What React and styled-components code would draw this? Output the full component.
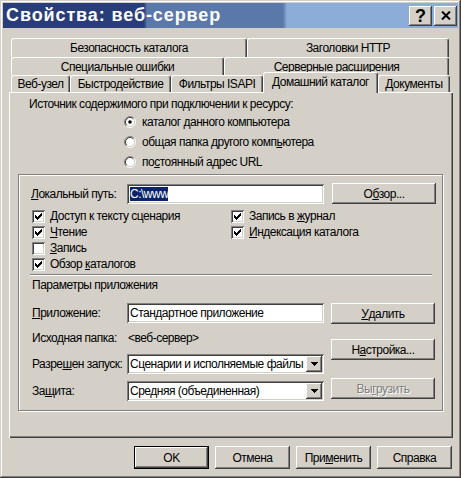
import React from 'react';
import styled, { createGlobalStyle, css } from 'styled-components';

const Global = createGlobalStyle`
  html, body { margin: 0; padding: 0; background: #d4d0c8; }
  body { font-family: "Liberation Sans", Arial, sans-serif; font-size: 12px; letter-spacing: -0.5px; color: #000; }
  * { box-sizing: border-box; }
`;

const raised = css`
  box-shadow: inset -1px -1px #404040, inset 1px 1px #fff, inset -2px -2px #808080, inset 2px 2px #d4d0c8;
`;
const sunken = css`
  box-shadow: inset 1px 1px #808080, inset -1px -1px #fff, inset 2px 2px #404040, inset -2px -2px #d4d0c8;
`;

const Window = styled.div`
  width: 461px;
  height: 478px;
  background: #d4d0c8;
  padding: 3px;
  box-shadow: inset -1px -1px #404040, inset 1px 1px #d4d0c8, inset -2px -2px #808080, inset 2px 2px #fff;
  display: flex;
  flex-direction: column;
`;

const TitleBar = styled.div`
  height: 25px;
  flex: none;
  display: flex;
  align-items: center;
  padding: 0 1px 0 3px;
  background: linear-gradient(to right, #2a3d7b 0, #2a3d7b 141px, #5b78aa 144px, #5b78aa 280px, #8badd8 284px, #8badd8 100%);
`;

const Title = styled.div`
  flex: 1;
  color: #fff;
  font-weight: bold;
  font-size: 18px;
  letter-spacing: 0.9px;
  line-height: 25px;
  white-space: nowrap;
`;

const CaptionButton = styled.div`
  width: 23px;
  height: 20px;
  background: #d4d0c8;
  ${raised};
  display: flex;
  align-items: center;
  justify-content: center;
  font-weight: bold;
  font-size: 18px;
  letter-spacing: 0;
  line-height: 1;
  & + & { margin-left: 2px; }
`;

const TabArea = styled.div`
  margin: 10px 0 0 8px;
  display: flex;
  flex-direction: column;
`;

const TabRow = styled.div`
  display: flex;
  height: ${p => p.$h}px;
`;

const Tab = styled.div`
  width: ${p => p.$w}px;
  flex: none;
  height: 100%;
  position: relative;
  background: #d4d0c8;
  border-top: 1px solid #fff;
  border-left: 1px solid #fff;
  border-right: 1px solid #404040;
  border-radius: 3px 3px 0 0;
  box-shadow: inset -1px 0 #808080;
  display: flex;
  align-items: center;
  justify-content: center;
  white-space: nowrap;
  ${p => p.$active && css`
    height: calc(100% + 4px);
    margin-top: -3px;
    padding-bottom: 3px;
    z-index: 2;
  `}
`;

const Panel = styled.div`
  margin-left: 6px;
  width: 444px;
  height: 346px;
  flex: none;
  background: #d4d0c8;
  box-shadow: inset 1px 1px #fff, inset -1px -1px #404040, inset -2px -2px #808080;
  padding-top: 5px;
  display: flex;
  flex-direction: column;
  align-items: flex-start;
`;

const Text = styled.div`
  line-height: 14px;
  white-space: nowrap;
  margin-left: ${p => p.$ml || 0}px;
  margin-top: ${p => p.$mt || 0}px;
`;

const U = styled.span`
  text-decoration: underline;
  text-underline-offset: 1px;
`;

const RadioList = styled.div`
  margin: 1px 0 0 115px;
  display: flex;
  flex-direction: column;
`;

const RadioItem = styled.div`
  height: 20px;
  display: flex;
  align-items: center;
  gap: 6px;
  white-space: nowrap;
`;

const GroupBox = styled.div`
  margin: 2px 0 0 9px;
  width: 425px;
  height: 237px;
  border: 1px solid #808080;
  box-shadow: inset 1px 1px #fff, 1px 1px #fff;
  padding-top: 8px;
  display: flex;
  flex-direction: column;
  align-items: flex-start;
`;

const PathRow = styled.div`
  margin-left: 12px;
  display: flex;
  align-items: center;
`;

const Label = styled.div`
  width: ${p => p.$w || 95}px;
  flex: none;
  white-space: nowrap;
`;

const Field = styled.div`
  width: 197px;
  height: ${p => p.$h || 20}px;
  flex: none;
  background: #fff;
  ${sunken};
  display: flex;
  align-items: center;
  padding: 0 2px 0 3px;
  white-space: nowrap;
  overflow: hidden;
`;

const Selected = styled.span`
  background: #0a246a;
  color: #fff;
  line-height: 14px;
`;

const ArrowButton = styled.div`
  width: 16px;
  height: 16px;
  margin-left: auto;
  flex: none;
  background: #d4d0c8;
  ${raised};
  display: flex;
  align-items: center;
  justify-content: center;
`;

const Button = styled.div`
  width: ${p => p.$w || 75}px;
  height: ${p => p.$h || 23}px;
  flex: none;
  background: #d4d0c8;
  ${raised};
  display: flex;
  align-items: center;
  justify-content: center;
  white-space: nowrap;
  margin-left: ${p => p.$ml || 0}px;
  margin-top: ${p => p.$mt || 0}px;
  ${p => p.$default && css`
    box-shadow: inset 0 0 0 1px #000, inset -2px -2px #404040, inset 2px 2px #fff, inset -3px -3px #808080;
  `}
  ${p => p.$disabled && css`
    color: #808080;
    text-shadow: 1px 1px #fff;
  `}
`;

const CheckGrid = styled.div`
  margin: 4px 0 0 13px;
  display: grid;
  grid-template-columns: 199px auto;
  grid-auto-rows: 16px;
`;

const CheckItem = styled.div`
  display: flex;
  align-items: center;
  gap: 5px;
  white-space: nowrap;
  grid-column: ${p => p.$col};
  grid-row: ${p => p.$row};
`;

const Box = styled.span`
  width: 13px;
  height: 13px;
  flex: none;
  background: #fff;
  ${sunken};
  display: inline-flex;
`;

const Separator = styled.div`
  margin: 2px 0 0 11px;
  width: 402px;
  height: 2px;
  border-top: 1px solid #808080;
  border-bottom: 1px solid #fff;
`;

const Lower = styled.div`
  margin: 11px 0 0 13px;
  display: flex;
  align-items: flex-start;
`;

const LeftCol = styled.div`
  width: 292px;
  display: flex;
  flex-direction: column;
`;

const FieldRow = styled.div`
  display: flex;
  align-items: center;
  height: ${p => p.$h || 20}px;
  margin-top: ${p => p.$mt || 0}px;
`;

const RightCol = styled.div`
  margin-left: 7px;
  display: flex;
  flex-direction: column;
`;

const ButtonBar = styled.div`
  margin-top: 8px;
  display: flex;
  justify-content: flex-end;
  gap: 6px;
  padding-right: 6px;
`;

const CHECK_STARTS = [2, 3, 4, 3, 2, 1, 0];

function CheckBox({ checked, children, col, row }) {
  return (
    <CheckItem $col={col} $row={row}>
      <Box>
        {checked && (
          <svg width="13" height="13" viewBox="0 0 13 13" shapeRendering="crispEdges">
            {CHECK_STARTS.map((s, i) => (
              <rect key={i} x={3 + i} y={3 + s} width="1" height="3" fill="#000" />
            ))}
          </svg>
        )}
      </Box>
      <span>{children}</span>
    </CheckItem>
  );
}

function Radio({ checked, children }) {
  return (
    <RadioItem>
      <svg width="12" height="12" viewBox="0 0 12 12">
        <circle cx="6" cy="6" r="4.5" fill="#fff" />
        <path d="M2.11 9.89 A5.5 5.5 0 0 1 9.89 2.11" fill="none" stroke="#808080" strokeWidth="1" />
        <path d="M9.89 2.11 A5.5 5.5 0 0 1 2.11 9.89" fill="none" stroke="#fff" strokeWidth="1" />
        <path d="M2.82 9.18 A4.5 4.5 0 0 1 9.18 2.82" fill="none" stroke="#404040" strokeWidth="1" />
        <path d="M9.18 2.82 A4.5 4.5 0 0 1 2.82 9.18" fill="none" stroke="#d4d0c8" strokeWidth="1" />
        {checked && <circle cx="6" cy="6" r="1.8" fill="#000" />}
      </svg>
      <span>{children}</span>
    </RadioItem>
  );
}

function Arrow() {
  return (
    <ArrowButton>
      <svg width="7" height="4" viewBox="0 0 7 4" shapeRendering="crispEdges">
        <path d="M0 0H7V1H6V2H5V3H4V4H3V3H2V2H1V1H0Z" fill="#000" />
      </svg>
    </ArrowButton>
  );
}

export default function App() {
  return (
    <>
      <Global />
      <Window>
        <TitleBar>
          <Title>Свойства: веб-сервер</Title>
          <CaptionButton>?</CaptionButton>
          <CaptionButton>
            <svg width="10" height="9" viewBox="0 0 10 9">
              <path d="M1 0.5 L9 8.5 M9 0.5 L1 8.5" stroke="#000" strokeWidth="2" />
            </svg>
          </CaptionButton>
        </TitleBar>

        <TabArea>
          <TabRow $h={19}>
            <Tab $w={236}>Безопасность каталога</Tab>
            <Tab $w={202}>Заголовки HTTP</Tab>
          </TabRow>
          <TabRow $h={18}>
            <Tab $w={213}>Специальные ошибки</Tab>
            <Tab $w={225}>Серверные расширения</Tab>
          </TabRow>
          <TabRow $h={17}>
            <Tab $w={59}>Веб-узел</Tab>
            <Tab $w={101}>Быстродействие</Tab>
            <Tab $w={92}>Фильтры ISAPI</Tab>
            <Tab $w={115} $active>Домашний каталог</Tab>
            <Tab $w={72}>Документы</Tab>
          </TabRow>
        </TabArea>

        <Panel>
          <Text $ml={20}>Источник содержимого при подключении к ресурсу:</Text>
          <RadioList>
            <Radio checked>каталог данного компьютера</Radio>
            <Radio>общая папка другого комп<U>ь</U>ютера</Radio>
            <Radio>по<U>с</U>тоянный адрес URL</Radio>
          </RadioList>

          <GroupBox>
            <PathRow>
              <Label $w={96}><U>Л</U>окальный путь:</Label>
              <Field $h={20}><Selected>C:\www</Selected></Field>
              <Button $w={104} $h={21} $ml={8}>О<U>б</U>зор...</Button>
            </PathRow>

            <CheckGrid>
              <CheckBox checked col={1} row={1}>Доступ к тексту сценария</CheckBox>
              <CheckBox checked col={1} row={2}><U>Ч</U>тение</CheckBox>
              <CheckBox col={1} row={3}><U>З</U>апись</CheckBox>
              <CheckBox checked col={1} row={4}>Обзор <U>к</U>аталогов</CheckBox>
              <CheckBox checked col={2} row={1}>Запись в <U>ж</U>урнал</CheckBox>
              <CheckBox checked col={2} row={2}><U>И</U>ндексация каталога</CheckBox>
            </CheckGrid>

            <Separator />
            <Text $ml={13} $mt={2}>Параметры приложения</Text>

            <Lower>
              <LeftCol>
                <FieldRow $h={20}>
                  <Label><U>П</U>риложение:</Label>
                  <Field>Стандартное приложение</Field>
                </FieldRow>
                <FieldRow $h={14} $mt={8}>
                  <Label>Исходная папка:</Label>
                  <Text $ml={1}>&lt;веб-сервер&gt;</Text>
                </FieldRow>
                <FieldRow $h={20} $mt={9}>
                  <Label>Разре<U>ш</U>ен запуск:</Label>
                  <Field>Сценарии и исполняемые файлы<Arrow /></Field>
                </FieldRow>
                <FieldRow $h={20} $mt={7}>
                  <Label>За<U>щ</U>ита:</Label>
                  <Field>Средняя (объединенная)<Arrow /></Field>
                </FieldRow>
              </LeftCol>
              <RightCol>
                <Button $w={104} $h={21}><U>У</U>далить</Button>
                <Button $w={104} $h={21} $mt={15}>Н<U>а</U>стройка...</Button>
                <Button $w={104} $h={21} $mt={18} $disabled>Вы<U>г</U>рузить</Button>
              </RightCol>
            </Lower>
          </GroupBox>
        </Panel>

        <ButtonBar>
          <Button $default>OK</Button>
          <Button>Отмена</Button>
          <Button>При<U>м</U>енить</Button>
          <Button>Справка</Button>
        </ButtonBar>
      </Window>
    </>
  );
}
